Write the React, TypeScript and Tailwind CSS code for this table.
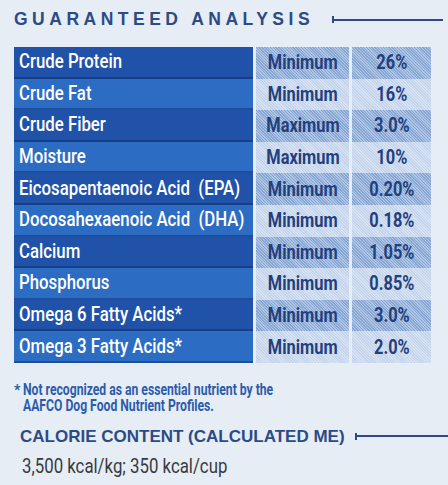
import React from "react";

const rows: [string, string, string][] = [
  ["Crude Protein", "Minimum", "26%"],
  ["Crude Fat", "Minimum", "16%"],
  ["Crude Fiber", "Maximum", "3.0%"],
  ["Moisture", "Maximum", "10%"],
  ["Eicosapentaenoic Acid  (EPA)", "Minimum", "0.20%"],
  ["Docosahexaenoic Acid  (DHA)", "Minimum", "0.18%"],
  ["Calcium", "Minimum", "1.05%"],
  ["Phosphorus", "Minimum", "0.85%"],
  ["Omega 6 Fatty Acids*", "Minimum", "3.0%"],
  ["Omega 3 Fatty Acids*", "Minimum", "2.0%"],
];

const hatch =
  "bg-[repeating-linear-gradient(45deg,#89a7d3_0px,#89a7d3_1px,#aec4e4_1px,#aec4e4_2px)]";
const hatchLight =
  "bg-[repeating-linear-gradient(45deg,#c3d4ec_0px,#c3d4ec_1px,#d6e2f2_1px,#d6e2f2_2px)]";

export default function App() {
  return (
    <div className="w-[448px] h-[485px] bg-[#e7edf5] overflow-hidden relative font-['Roboto',sans-serif]">
      {/* Title */}
      <div className="flex items-center h-[33px] pl-[14px] pt-[6px] pr-[5px]">
        <span className="font-['Liberation_Sans',sans-serif] font-bold text-[17.5px] tracking-[4.5px] text-[#2c4b86] leading-none whitespace-nowrap">
          GUARANTEED ANALYSIS
        </span>
        <div className="flex items-center ml-[18px] flex-1">
          <div className="w-[2px] h-[7px] bg-[#2c4b86]" />
          <div className="flex-1 h-[2px] bg-[#2c4b86]" />
        </div>
      </div>

      {/* Table */}
      <div className="ml-[14px] mt-[14px] grid grid-cols-[239px_93px_79px] gap-x-[3px]">
        {rows.map(([name, kind, val], i) => {
          const dark = i % 2 === 0;
          return (
            <React.Fragment key={name}>
              <div
                className={`h-[31.6px] flex items-center pl-[5px] border-b-[2px] ${
                  dark ? "bg-[#2152a9] border-[#173f86]" : "bg-[#2d6cc3] border-[#1d4f9c]"
                }`}
              >
                <span className="inline-block origin-left scale-x-[0.8] text-white text-[21px] font-medium leading-none whitespace-pre">
                  {name}
                </span>
              </div>
              <div
                className={`h-[31.6px] flex items-center justify-center ${dark ? hatch : hatchLight}`}
              >
                <span className="inline-block scale-x-[0.78] text-[#223f7e] text-[21px] font-bold leading-none">
                  {kind}
                </span>
              </div>
              <div
                className={`h-[31.6px] flex items-center justify-center ${dark ? hatch : hatchLight}`}
              >
                <span className="inline-block scale-x-[0.78] text-[#223f7e] text-[21px] font-bold leading-none">
                  {val}
                </span>
              </div>
            </React.Fragment>
          );
        })}
      </div>

      {/* Footnote */}
      <div className="mt-[19px] ml-[14px] flex text-[#2b5cab] text-[16px] font-bold leading-[16px]">
        <span className="w-[9px] text-[14px] leading-[16px]">*</span>
        <div className="flex flex-col">
          <div className="h-[16px] w-[260px]">
            <span className="inline-block origin-left scale-x-[0.76] whitespace-nowrap">
              Not recognized as an essential nutrient by the
            </span>
          </div>
          <div className="h-[16px] w-[200px]">
            <span className="inline-block origin-left scale-x-[0.76] whitespace-nowrap">
              AAFCO Dog Food Nutrient Profiles.
            </span>
          </div>
        </div>
      </div>

      {/* Calorie content */}
      <div className="flex items-center mt-[14px] pl-[20px]">
        <span className="font-['Liberation_Sans',sans-serif] font-bold text-[17px] tracking-[0px] text-[#2c4b86] leading-none whitespace-nowrap">
          CALORIE CONTENT (CALCULATED ME)
        </span>
        <div className="flex items-center ml-[10px] flex-1">
          <div className="w-[2px] h-[7px] bg-[#2c4b86]" />
          <div className="flex-1 h-[2px] bg-[#2c4b86]" />
        </div>
      </div>

      <div className="mt-[11px] pl-[22px] text-[#363a40] text-[20px] leading-none">
        <span className="inline-block origin-left scale-x-[0.84] whitespace-nowrap">
          3,500 kcal/kg; 350 kcal/cup
        </span>
      </div>
    </div>
  );
}
